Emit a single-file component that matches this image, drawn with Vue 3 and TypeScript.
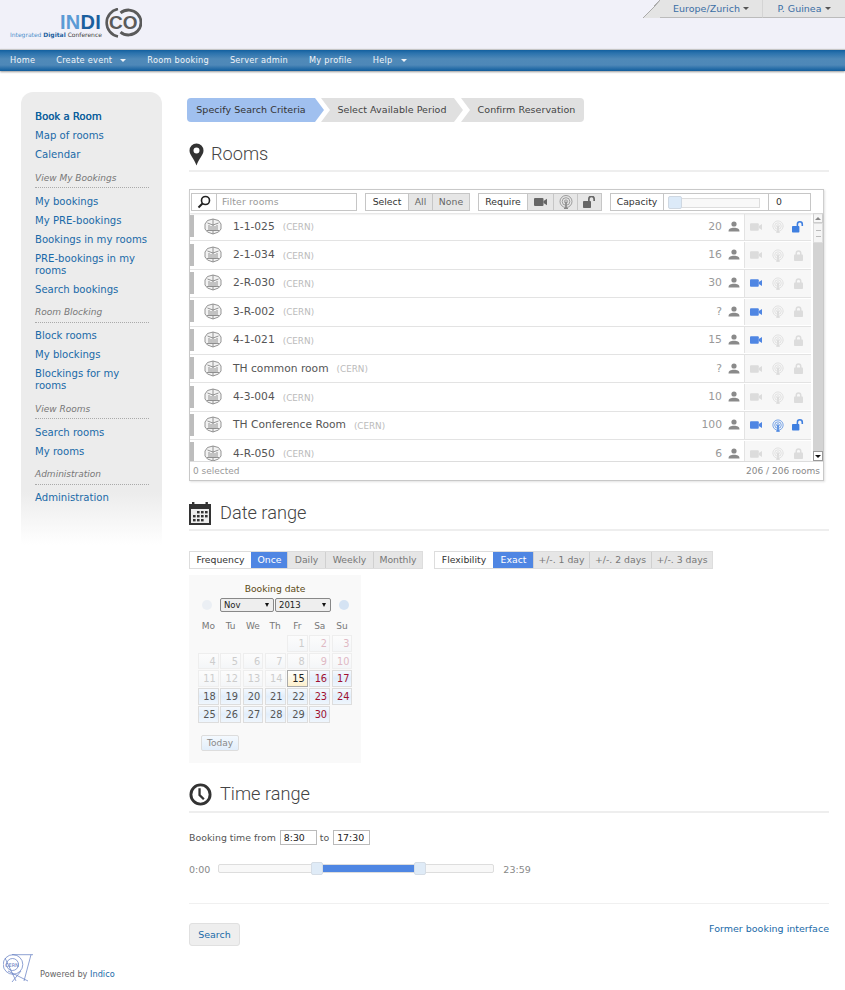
<script setup lang="ts">
interface Room { name: string; cap: string; vc: boolean; wifi: boolean; open: boolean }
const nav = [
  { t: 'Home', c: false }, { t: 'Create event', c: true }, { t: 'Room booking', c: false },
  { t: 'Server admin', c: false }, { t: 'My profile', c: false }, { t: 'Help', c: true },
]
const side = [
  { items: ['Book a Room', 'Map of rooms', 'Calendar'] },
  { title: 'View My Bookings', items: ['My bookings', 'My PRE-bookings', 'Bookings in my rooms', 'PRE-bookings in my rooms', 'Search bookings'] },
  { title: 'Room Blocking', items: ['Block rooms', 'My blockings', 'Blockings for my rooms'] },
  { title: 'View Rooms', items: ['Search rooms', 'My rooms'] },
  { title: 'Administration', items: ['Administration'] },
]
const rooms: Room[] = [
  { name: '1-1-025', cap: '20', vc: false, wifi: false, open: true },
  { name: '2-1-034', cap: '16', vc: false, wifi: false, open: false },
  { name: '2-R-030', cap: '30', vc: true, wifi: false, open: false },
  { name: '3-R-002', cap: '?', vc: true, wifi: false, open: false },
  { name: '4-1-021', cap: '15', vc: true, wifi: false, open: false },
  { name: 'TH common room', cap: '?', vc: false, wifi: false, open: false },
  { name: '4-3-004', cap: '10', vc: false, wifi: false, open: false },
  { name: 'TH Conference Room', cap: '100', vc: true, wifi: true, open: true },
  { name: '4-R-050', cap: '6', vc: false, wifi: false, open: false },
]
const weekDays = ['Mo', 'Tu', 'We', 'Th', 'Fr', 'Sa', 'Su']
const blanks = [0, 1, 2, 3]
const days = Array.from({ length: 30 }, (_, i) => i + 1)
const isWeekend = (d: number) => { const m = d % 7; return m === 2 || m === 3 }
</script>

<template>
  <div class="page">
    <header class="top">
      <div class="logo">
        <span class="logo-word"><span class="light">IN</span><span class="dark">DI</span></span>
        <svg class="logo-rings" width="39" height="30" viewBox="0 0 39 30">
          <path d="M15 1 A14 14 0 0 0 15 28.5" fill="none" stroke="#5a5a5a" stroke-width="2.6" />
          <path d="M17.5 4.9 A12.5 12.5 0 1 1 17.5 24.1" fill="none" stroke="#5a5a5a" stroke-width="2.8" />
        </svg>
        <span class="logo-co">CO</span>
        <span class="logo-sub"><span class="l">Integrated </span><b>Digital</b> <span class="c">Conference</span></span>
      </div>
      <div class="tabs">
        <span class="corner"></span>
        <div class="tab tab-a">Europe/Zurich <i class="caret"></i></div>
        <div class="tab tab-b">P. Guinea <i class="caret"></i></div>
      </div>
    </header>
    <nav class="nav">
      <span v-for="n in nav" :key="n.t" class="nav-item">{{ n.t }}<i v-if="n.c" class="nav-caret"></i></span>
    </nav>

    <div class="layout">
      <aside class="side">
        <section v-for="(g, i) in side" :key="i" class="side-group">
          <div v-if="g.title" class="side-title">{{ g.title }}</div>
          <a v-for="(it, k) in g.items" :key="it" class="side-link" :class="{ strong: i === 0 && k === 0 }">{{ it }}</a>
        </section>
      </aside>

      <main class="main">
        <div class="steps">
          <div class="step s1">Specify Search Criteria</div>
          <div class="step s2">Select Available Period</div>
          <div class="step s3">Confirm Reservation</div>
        </div>

        <h2 class="head rooms-head">
          <svg class="ico" width="15" height="23" viewBox="0 0 15 23">
            <path fill-rule="evenodd" fill="#333" d="M7.5 0.5A7 7 0 0 0 .5 7.5C.5 12 5 15 7.5 22.5 10 15 14.5 12 14.5 7.5A7 7 0 0 0 7.5 .5ZM7.5 4.5a3 3 0 1 1 0 6 3 3 0 0 1 0-6Z" />
          </svg>
          <span>Rooms</span>
        </h2>

        <div class="picker">
          <div class="toolbar">
            <div class="seg filter">
              <span class="glass">
                <svg width="14" height="14" viewBox="0 0 14 14"><circle cx="8.5" cy="5.5" r="4" fill="none" stroke="#222" stroke-width="1.6" /><path d="M5.5 8.5 1.5 12.5" stroke="#222" stroke-width="2" /></svg>
              </span>
              <span class="filter-text">Filter rooms</span>
            </div>
            <div class="seg sel">
              <span class="lab">Select</span><span class="btn">All</span><span class="btn">None</span>
            </div>
            <div class="seg req">
              <span class="lab">Require</span>
              <span class="btn ib">
                <svg width="13" height="8" viewBox="0 0 13 8"><use href="#i-vc" fill="#666" /></svg>
              </span>
              <span class="btn ib">
                <svg width="14" height="14" viewBox="0 0 14 14" class="gray-stroke"><use href="#i-wifi" /></svg>
              </span>
              <span class="btn ib">
                <svg width="13" height="12" viewBox="0 0 13 12"><use href="#i-open" fill="#666" /></svg>
              </span>
            </div>
            <div class="seg cap">
              <span class="lab">Capacity</span>
              <span class="cap-track"><i class="cap-rail"></i><i class="cap-thumb"></i></span>
              <span class="cap-val">0</span>
            </div>
          </div>

          <div class="list-wrap">
            <div class="list">
              <div v-for="r in rooms" :key="r.name" class="row">
                <i class="mark"></i>
                <svg class="bld" width="18" height="17" viewBox="0 0 18 17" fill="none" stroke="#888" stroke-width=".9">
                  <path d="M9 1 14.5 2.5 17 6V11L14.5 14 9 16 3.5 14 1 11V6L3.5 2.5Z" fill="#f2f2f2" />
                  <path d="M9 1V16M3.5 5 9 7 14.5 5M5 7V12M7 8V13M11 8V13M13 7V12M3 12.5H15" />
                </svg>
                <span class="room-name">{{ r.name }}</span>
                <span class="site">(CERN)</span>
                <span class="capn">{{ r.cap }}</span>
                <svg class="person" width="12" height="11" viewBox="0 0 12 11" fill="#8a8a8a">
                  <circle cx="6" cy="3" r="2.6" /><path d="M.5 10.5C.5 7.5 3 6.8 6 6.8S11.5 7.5 11.5 10.5Z" />
                </svg>
                <div class="feat">
                  <svg width="12" height="8" viewBox="0 0 13 8"><use href="#i-vc" :fill="r.vc ? '#4f86e3' : '#dcdcdc'" /></svg>
                  <svg width="12" height="13" viewBox="0 0 14 14" :class="r.wifi ? 'blue-stroke' : 'pale-stroke'"><use href="#i-wifi" /></svg>
                  <svg v-if="r.open" width="12" height="12" viewBox="0 0 13 12"><use href="#i-open" fill="#3f7fe0" /></svg>
                  <svg v-else width="9" height="11" viewBox="0 0 9 11"><use href="#i-lock" fill="#dcdcdc" /></svg>
                </div>
              </div>
            </div>
            <div class="scroll">
              <span class="sb-btn"><i class="up"></i></span>
              <span class="sb-thumb"><i></i></span>
              <span class="sb-rest"></span>
              <span class="sb-btn dn"><i class="down"></i></span>
            </div>
          </div>
          <div class="list-foot">
            <span class="sel-count">0 selected</span>
            <span>206 / 206 rooms</span>
          </div>
        </div>

        <h2 class="head date-head">
          <svg class="ico" width="22" height="23" viewBox="0 0 22 23">
            <rect x="0" y="2" width="22" height="21" fill="#333" />
            <rect x="3" y="0" width="2.4" height="4" fill="#333" /><rect x="16.5" y="0" width="2.4" height="4" fill="#333" />
            <rect x="2" y="7" width="18" height="14" fill="#eee" />
            <g fill="#333">
              <rect x="8" y="9" width="2.6" height="2.4" /><rect x="12" y="9" width="2.6" height="2.4" /><rect x="16" y="9" width="2.6" height="2.4" />
              <rect x="4" y="13" width="2.6" height="2.4" /><rect x="8" y="13" width="2.6" height="2.4" /><rect x="12" y="13" width="2.6" height="2.4" /><rect x="16" y="13" width="2.6" height="2.4" />
              <rect x="4" y="17" width="2.6" height="2.4" /><rect x="8" y="17" width="2.6" height="2.4" /><rect x="12" y="17" width="2.6" height="2.4" />
            </g>
          </svg>
          <span>Date range</span>
        </h2>

        <div class="opts">
          <div class="seg freq">
            <span class="lab">Frequency</span><span class="btn on">Once</span><span class="btn">Daily</span><span class="btn">Weekly</span><span class="btn">Monthly</span>
          </div>
          <div class="seg flex-seg">
            <span class="lab">Flexibility</span><span class="btn on">Exact</span><span class="btn">+/-. 1 day</span><span class="btn">+/-. 2 days</span><span class="btn">+/-. 3 days</span>
          </div>
        </div>

        <div class="cal">
          <div class="cal-title">Booking date</div>
          <div class="cal-sel">
            <i class="cal-arrow faint"></i>
            <span class="fake-sel s-m">Nov<i></i></span>
            <span class="fake-sel s-y">2013<i></i></span>
            <i class="cal-arrow"></i>
          </div>
          <div class="cal-grid">
            <span v-for="w in weekDays" :key="w" class="wd">{{ w }}</span>
            <span v-for="b in blanks" :key="'b' + b" class="blank"></span>
            <span
              v-for="d in days" :key="d" class="day"
              :class="{ past: d < 15, today: d === 15, future: d > 15, we: isWeekend(d) }"
            >{{ d }}</span>
          </div>
          <span class="today-btn">Today</span>
        </div>

        <h2 class="head time-head">
          <svg class="ico" width="23" height="23" viewBox="0 0 24 24" fill="none" stroke="#333">
            <circle cx="12" cy="12" r="10" stroke-width="3" />
            <path d="M11 5.5V12.5L15.5 17" stroke-width="2.4" />
          </svg>
          <span>Time range</span>
        </h2>

        <div class="time-row">Booking time from <span class="tinput">8:30</span> to <span class="tinput">17:30</span></div>
        <div class="slider-row">
          <span class="sl-lab">0:00</span>
          <div class="slider">
            <i class="sl-range"></i>
            <i class="sl-handle h1"></i>
            <i class="sl-handle h2"></i>
          </div>
          <span class="sl-lab">23:59</span>
        </div>

        <div class="actions">
          <span class="search-btn">Search</span>
          <a class="former">Former booking interface</a>
        </div>
      </main>
    </div>

    <footer class="foot">
      <svg width="30" height="29" viewBox="0 0 30 29" fill="none" stroke="#5d78c0" stroke-width=".7">
        <circle cx="10" cy="10.5" r="9.8" />
        <circle cx="9.5" cy="10.5" r="6" />
        <path d="M9 .7H30M28 .7 21 27M5 17 25 27M18 17 9 28M2 4 13 27" />
        <text x="2" y="12.5" font-size="5" fill="#5d78c0" stroke="none" font-family="DejaVu Sans">CERN</text>
      </svg>
      <span class="powered">Powered by <a>Indico</a></span>
    </footer>

    <svg class="defs" width="0" height="0">
      <defs>
        <g id="i-vc"><rect x="0" y="0" width="9.5" height="8" rx="1" /><path d="M9.5 3 13 .8V7.2L9.5 5Z" /></g>
        <g id="i-wifi" fill="none" stroke-width=".8">
          <circle cx="7" cy="6.5" r="6" /><circle cx="7" cy="6.5" r="3.8" /><circle cx="7" cy="6.5" r="1.6" />
          <path d="M7 6.5V13.5M5 13.5H9" stroke-width="1.6" />
        </g>
        <g id="i-open"><rect x="0" y="5" width="8" height="7" rx=".8" /><path fill-rule="evenodd" d="M5 5.5V3a3.4 3.4 0 0 1 7 0V5H10.3V3A1.7 1.7 0 0 0 6.7 3V5.5Z" /></g>
        <g id="i-lock"><rect x="0" y="4.5" width="9" height="6.5" rx=".8" /><path fill-rule="evenodd" d="M1.5 5V3.2a3 3 0 0 1 6 0V5H6V3.2a1.5 1.5 0 0 0-3 0V5Z" /></g>
      </defs>
    </svg>
  </div>
</template>

<style>
html, body { margin: 0; padding: 0; background: #fff; overflow: hidden; }
</style>

<style scoped>
.page { width: 845px; height: 990px; position: relative; overflow: hidden; font-family: "DejaVu Sans", Verdana, sans-serif; font-size: 10px; color: #444; }
.top { height: 49px; background: #f1f1f9; display: flex; justify-content: space-between; align-items: flex-start; }
.logo { position: relative; width: 150px; height: 49px; }
.logo-word { position: absolute; left: 60px; top: 14px; font: bold 20px/16px "Liberation Sans", sans-serif; letter-spacing: .3px; }
.light { color: #5a9bd5; }
.dark { color: #1b5f9e; }
.logo-rings { position: absolute; left: 103px; top: 8px; }
.logo-co { position: absolute; left: 109px; top: 15px; font: bold 19px/15px "Liberation Sans", sans-serif; color: #5a5a5a; }
.logo-sub { position: absolute; left: 10px; top: 31px; font-size: 6px; line-height: 7px; white-space: nowrap; color: #444; }
.logo-sub .l { color: #4d90cc; }
.logo-sub b { color: #1b5f9e; }
.tabs { display: flex; height: 18px; align-items: stretch; }
.corner { width: 17px; background: linear-gradient(to bottom right, transparent 49%, #aaa 49%, #aaa 52%, #e4e4e4 53%); }
.tab { background: #e4e4e4; border-bottom: 1px solid #bbb; color: #3a6ea5; display: flex; align-items: center; justify-content: center; gap: 3px; font-size: 9.5px; box-sizing: border-box; }
.tab-a { width: 103px; border-right: 1px solid #d4d4d4; }
.tab-b { width: 82px; }
.caret { width: 0; height: 0; border: 3px solid transparent; border-top: 3px solid #555; border-bottom: 0; }
.nav { height: 22px; box-sizing: border-box; display: flex; align-items: center; padding: 0 0 2px 10px; background: linear-gradient(#13609f 0, #2a72ad 3px, #4f89b8 9px, #4e88b8 15px, #1a64a2 20px, #10568f 22px); box-shadow: 0 1px 2px #999; border-top: 1px solid #c6c6c6; font-size: 8.2px; letter-spacing: .25px; color: #f0f4f8; }
.nav-item { display: inline-flex; align-items: center; margin-right: 21px; white-space: nowrap; }
.nav-caret { width: 0; height: 0; border: 3.2px solid transparent; border-top: 3.2px solid #f0f4f8; border-bottom: 0; margin-left: 8px; margin-top: 1px; }
.layout { display: flex; align-items: flex-start; padding: 21px 16px 0 21px; }
.side { width: 141px; height: 453px; flex: none; box-sizing: border-box; padding: 19px 13px 0 14px; border-radius: 12px 12px 0 0; background: linear-gradient(#ececec 0, #ececec 400px, #fff 453px); font-size: 10.1px; line-height: 12px; }
.side-link { display: block; color: #1a6aa8; margin-bottom: 7px; }
.side-link.strong { color: #0e5f9d; text-shadow: .3px 0 0 #0e5f9d; }
.side-group + .side-group { margin-top: 11.5px; }
.side-title { font-style: italic; font-size: 9px; line-height: 11px; color: #777; padding-bottom: 3.5px; border-bottom: 1px dotted #aaa; margin-bottom: 7.5px; }
.main { margin-left: 27px; width: 640px; flex: none; }
.steps { display: flex; height: 24px; margin-left: -2px; margin-top: 6px; font-size: 9.5px; line-height: 24px; letter-spacing: .05px; color: #444; }
.step { background: #e0e0e0; position: relative; text-align: center; box-sizing: border-box; white-space: nowrap; }
.s1 { width: 137px; background: #a0c0ef; border-radius: 4px 0 0 4px; color: #333; clip-path: polygon(0 0, 128px 0, 137px 50%, 128px 100%, 0 100%); padding-right: 9px; }
.s2 { width: 142px; margin-left: -3px; clip-path: polygon(0 0, 133px 0, 142px 50%, 133px 100%, 0 100%, 9px 50%); }
.s3 { width: 123px; margin-left: -2px; border-radius: 0 4px 4px 0; clip-path: polygon(0 0, 100% 0, 100% 100%, 0 100%, 9px 50%); padding-left: 8px; }
.head { margin: 0; display: flex; align-items: center; border-bottom: 2px solid #eee; font: 300 18.2px/24px Roboto, sans-serif; color: #444; box-sizing: border-box; }
.ico { flex: none; }
.rooms-head { margin-top: 20px; height: 30px; padding-bottom: 4px; gap: 7px; }
.picker { margin-top: 17px; width: 635px; border: 1px solid #c8c8c8; box-sizing: border-box; box-shadow: 1px 1px 2px #e2e2e2; }
.toolbar { height: 23px; display: flex; align-items: center; gap: 8px; padding-left: 1px; position: relative; z-index: 1; box-shadow: 0 1px 2px #ddd; }
.seg { display: grid; grid-auto-flow: column; height: 18px; box-sizing: border-box; border: 1px solid #c6c6c6; font-size: 9.3px; line-height: 16px; color: #333; background: #fff; flex: none; }
.lab { text-align: center; white-space: nowrap; }
.btn { background: #e6e6e6; color: #666; border-left: 1px solid #c6c6c6; box-sizing: border-box; text-align: center; white-space: nowrap; }
.ib { display: flex; align-items: center; justify-content: center; }
.filter { width: 166px; grid-template-columns: 25px 1fr; }
.glass { border-right: 1px solid #c6c6c6; display: flex; align-items: center; justify-content: center; }
.filter-text { padding-left: 5px; color: #999; letter-spacing: .15px; }
.sel { width: 105px; grid-template-columns: 42px 24px 37px; }
.req { width: 124px; grid-template-columns: 48px 26px 24px 24px; }
.cap { width: 201px; grid-template-columns: 52px 106px 1fr; }
.cap-track { position: relative; border-left: 1px solid #c6c6c6; border-right: 1px solid #c6c6c6; }
.cap-rail { position: absolute; left: 5px; right: 8px; top: 4px; height: 8px; border: 1px solid #ddd; background: #f8f8f8; }
.cap-thumb { position: absolute; left: 4px; top: 2px; width: 12px; height: 11px; background: #dceaf8; border: 1px solid #cfd8e2; border-radius: 2px; }
.cap-val { padding-left: 7px; }
.gray-stroke { stroke: #888; }
.pale-stroke { stroke: #d8d8d8; }
.blue-stroke { stroke: #3f7fe0; }
.list-wrap { height: 248px; display: flex; overflow: hidden; }
.list { width: 621px; height: 248px; overflow: hidden; flex: none; margin-right: 2px; }
.row { height: 28.4px; box-sizing: border-box; border-bottom: 1px solid #e3e3e3; display: flex; align-items: center; padding-bottom: 1px; }
.mark { width: 4px; height: 22px; background: #bdbdbd; flex: none; }
.bld { margin-left: 10px; flex: none; }
.room-name { margin-left: 11px; font-size: 10.7px; color: #555; white-space: nowrap; }
.site { margin-left: 8px; margin-top: 2px; color: #bbb; font-size: 8.8px; white-space: nowrap; }
.capn { margin-left: auto; font-size: 10.8px; color: #999; }
.person { margin-left: 6px; margin-right: 4px; flex: none; }
.feat { width: 67px; height: 100%; margin-bottom: -1px; flex: none; background: #f7f7f7; border-left: 1px solid #e3e3e3; display: grid; grid-template-columns: 22px 22px 18px; align-items: center; justify-items: center; box-sizing: border-box; }
.scroll { width: 10px; display: flex; flex-direction: column; flex: none; }
.sb-btn { height: 10px; background: #f7f7f7; border: 1px solid #ccc; box-sizing: border-box; display: flex; align-items: center; justify-content: center; flex: none; }
.dn { background: #fff; border-color: #999; }
.up { width: 0; height: 0; border: 3px solid transparent; border-bottom: 3px solid #888; border-top: 0; }
.down { width: 0; height: 0; border: 3px solid transparent; border-top: 3px solid #111; border-bottom: 0; }
.sb-thumb { height: 20px; background: #f5f5f5; border: 1px solid #ddd; box-sizing: border-box; flex: none; display: flex; align-items: center; justify-content: center; }
.sb-thumb i { width: 5px; height: 5px; border-top: 1px solid #bbb; border-bottom: 1px solid #bbb; }
.sb-rest { flex: 1; background: #d3d3d3; }
.list-foot { height: 19px; border-top: 1px solid #ddd; display: flex; justify-content: space-between; padding: 0 3px; font-size: 9px; line-height: 18px; color: #888; box-sizing: border-box; }
.sel-count { color: #999; }
.date-head { margin-top: 18px; height: 32px; padding-bottom: 2px; gap: 9px; }
.opts { display: flex; gap: 11px; margin-top: 20px; }
.opts .seg { border-color: #ddd; }
.opts .btn { border-left-color: #d0d0d0; color: #777; }
.opts .btn.on { background: #4f86e3; color: #fff; border-left-color: #4f86e3; }
.freq { width: 234px; grid-template-columns: 61px 36px 38px 48px 49px; }
.flex-seg { width: 279px; grid-template-columns: 58px 40px 56px 62px 61px; }
.cal { margin-top: 6px; width: 172px; height: 188px; box-sizing: border-box; background: #f9f9f9; padding: 8px 0 0 9px; position: relative; }
.cal-title { text-align: center; font-size: 9.2px; line-height: 11px; color: #5b4a14; margin-left: -9px; }
.cal-sel { display: flex; align-items: center; margin-top: 4px; height: 14px; }
.cal-arrow { width: 10px; height: 10px; border-radius: 50%; background: #d5e3f3; }
.cal-arrow.faint { background: #ebeff4; margin: 0 8px 0 4px; }
.fake-sel { height: 14px; box-sizing: border-box; border: 1px solid #888; border-radius: 2px; background: #eee; font-size: 8.5px; line-height: 12px; padding-left: 3px; color: #222; position: relative; margin-right: 1px; }
.fake-sel i { position: absolute; right: 4px; top: 4px; width: 0; height: 0; border: 2.5px solid transparent; border-top: 4px solid #111; border-bottom: 0; }
.s-m { width: 54px; }
.s-y { width: 56px; margin-right: 8px; }
.cal-grid { display: grid; grid-template-columns: repeat(7, 20.7px); column-gap: 1.6px; grid-auto-rows: 16.8px; row-gap: 1px; margin-top: 5px; }
.wd { text-align: center; font-size: 9px; line-height: 18px; color: #777; }
.day { box-sizing: border-box; border: 1px solid #eee; font-size: 9.8px; line-height: 15px; text-align: right; padding-right: 2px; }
.past { background: linear-gradient(#fcfcfc, #f4f6f8); color: #ccc; }
.past.we { color: #dfb9c4; }
.today { background: linear-gradient(#fff, #fdf0cc); border-color: #aaa; color: #222; }
.future { background: linear-gradient(#f4f9fe 0, #e2eefb 50%, #eff6fd 100%); border-color: #ddd; color: #555; }
.future.we { color: #a01030; }
.today-btn { display: block; width: 38px; height: 16px; box-sizing: border-box; margin: 12px 0 0 3px; border: 1px solid #ddd; border-radius: 2px; background: linear-gradient(#f4f9fe, #e2eefb); text-align: center; font-size: 9px; line-height: 14px; color: #888; }
.time-head { margin-top: 16px; height: 34px; padding-bottom: 2px; gap: 8px; }
.time-row { margin-top: 17px; height: 16px; font-size: 9.4px; line-height: 16px; color: #555; white-space: nowrap; }
.tinput { display: inline-block; width: 37px; height: 15px; box-sizing: border-box; border: 1px solid #bbb; padding-left: 3px; margin-left: 1px; line-height: 13px; color: #222; vertical-align: top; }
.slider-row { display: flex; align-items: center; margin-top: 15px; height: 14px; font-size: 9.5px; color: #888; }
.sl-lab { flex: none; margin-top: 2px; }
.slider { position: relative; width: 276px; height: 9px; box-sizing: border-box; margin: 0 9px 0 8px; border: 1px solid #ddd; border-radius: 2px; background: #f8f8f8; }
.sl-range { position: absolute; left: 100px; width: 102px; top: 0; bottom: 0; background: #4f86e3; }
.sl-handle { position: absolute; top: -3px; width: 12px; height: 13px; box-sizing: border-box; background: #dfebf7; border: 1px solid #d5dde6; border-radius: 2px; }
.h1 { left: 92px; }
.h2 { left: 195px; }
.actions { margin-top: 28px; border-top: 1px solid #f0f0f0; padding-top: 19px; display: flex; justify-content: space-between; align-items: flex-start; }
.search-btn { width: 51px; height: 23px; box-sizing: border-box; background: #eee; border: 1px solid #e0e0e0; border-radius: 3px; text-align: center; color: #1a6aa8; font-size: 9.5px; line-height: 21px; }
.former { font-size: 9.5px; color: #1a6aa8; }
.foot { position: absolute; left: 3px; top: 954px; display: flex; align-items: flex-end; gap: 7px; }
.powered { font-size: 8.2px; color: #666; margin-bottom: 4px; white-space: nowrap; }
.powered a { color: #1a6aa8; }
.defs { position: absolute; }
</style>
